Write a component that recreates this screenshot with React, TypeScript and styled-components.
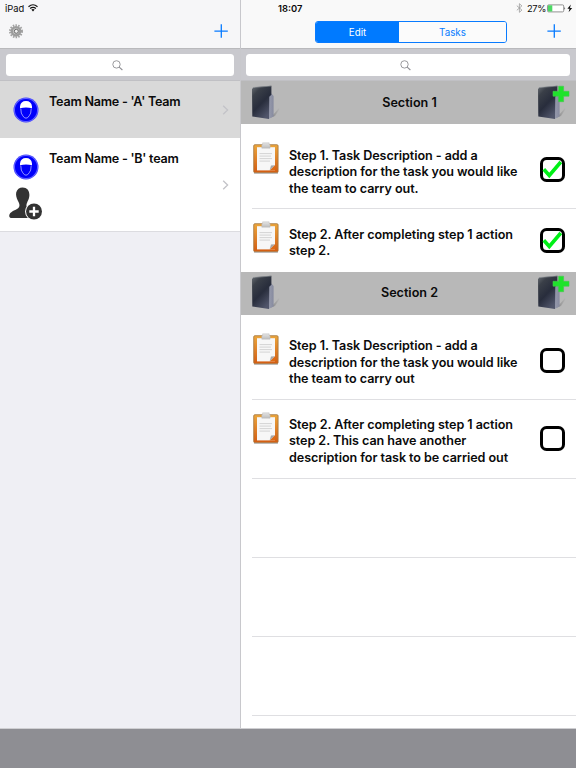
import React from 'react';
import styled, {createGlobalStyle} from 'styled-components';

const sections = [
  {name: 'Section 1', steps: [
    {lines: ['Step 1. Task Description - add a', 'description for the task you would like', 'the team to carry out.'], done: true, h: 85},
    {lines: ['Step 2. After completing step 1 action', 'step 2.'], done: true, h: 62.5},
  ]},
  {name: 'Section 2', steps: [
    {lines: ['Step 1. Task Description - add a', 'description for the task you would like', 'the team to carry out'], done: false, h: 85},
    {lines: ['Step 2. After completing step 1 action', 'step 2. This can have another', 'description for task to be carried out'], done: false, h: 79},
  ]},
];

const Plus = () => (
  <svg width="14" height="14" viewBox="0 0 14 14"><path d="M7.3 0.3V13.7M0.4 7.2H13.8" stroke="#087bff" strokeWidth="1.3"/></svg>
);

const SearchIcon = () => (
  <svg width="11" height="11" viewBox="0 0 11 11" fill="none" stroke="#8e8e93">
    <circle cx="4.5" cy="4.4" r="3.7" strokeWidth="0.9"/>
    <path d="M7.2 7.1L10.4 10" strokeWidth="1.1"/>
  </svg>
);

const Chevron = () => (
  <svg width="7" height="10" viewBox="0 0 7 10"><path d="M1.2 0.7L5.6 5L1.2 9.3" fill="none" stroke="#c3c3c8" strokeWidth="1.3"/></svg>
);

const Gear = () => (
  <svg width="16" height="16" viewBox="0 0 16 16">
    <circle cx="8" cy="8.3" r="6" fill="none" stroke="#a2a2a2" strokeWidth="2" strokeDasharray="1.5 1.2"/>
    <circle cx="8" cy="8.3" r="4.2" fill="#c8c8c8" stroke="#9c9c9c" strokeWidth="2.4"/>
    <circle cx="8.3" cy="8.3" r="2" fill="#f0f0f0" stroke="#6c6c6c" strokeWidth="1"/>
  </svg>
);

const Wifi = () => (
  <svg width="10" height="8" viewBox="0 0 10 8" fill="none" stroke="#111" strokeWidth="1.2">
    <path d="M0.5 2.7Q5 -1.2 9.5 2.7M2.1 4.5Q5 2.1 7.9 4.5"/>
    <path d="M3.3 5.6Q5 4.3 6.7 5.6L5 7.5Z" fill="#111" stroke="none"/>
  </svg>
);

const Bluetooth = () => (
  <svg width="7" height="10" viewBox="0 0 7 10"><path d="M0.8 2.7L5.9 7.1L3.4 9.3V0.7L5.9 2.9L0.8 7.3" fill="none" stroke="#9a9a9a" strokeWidth="0.8"/></svg>
);

const Battery = () => (
  <svg width="26" height="9" viewBox="0 0 26 9">
    <rect x="0.5" y="0.9" width="16.2" height="7" rx="1.2" fill="#fff" stroke="#777" strokeWidth="0.8"/>
    <rect x="1" y="1.3" width="4.3" height="6.2" fill="#4cd964"/>
    <path d="M17.4 3Q19 4.4 17.4 5.8Z" fill="#444"/>
    <path d="M23.8 0.6L20.4 4.8H22.5L21.6 8.2L25.2 3.9H23Z" fill="#111"/>
  </svg>
);

const Helmet = () => (
  <svg width="26" height="26" viewBox="0 0 26 26">
    <circle cx="13" cy="13" r="12.5" fill="#3f3fff"/>
    <circle cx="13" cy="13" r="11.6" fill="none" stroke="#8c8cff" strokeWidth="0.5"/>
    <circle cx="13" cy="13" r="11" fill="#0000fa"/>
    <path d="M7 11.2V9.5Q7.6 4 13 4T19 9.5V11.2Q13 9.9 7 11.2Z" fill="#fff"/>
    <path d="M7.8 11.6Q7.8 17 9.8 18.8Q11.2 21.2 13 21.2T16.2 18.8Q18.2 17 18.2 11.6" fill="none" stroke="#b9b9ff" strokeWidth="0.8"/>
  </svg>
);

const AddUser = () => (
  <svg width="34" height="34" viewBox="0 0 34 34">
    <path d="M13.6 0.5C18 0.5 20.5 3.5 20.4 8C20.3 12.5 18.2 14.5 17.5 17.5C17.1 19.5 18.2 21.1 20.5 22.1L24 24V31H3Q0.2 31 0.2 28.7C0.8 24.5 5.8 23.6 8.8 21.5C11.5 19.5 10.5 16.5 9 14C7.4 11.2 6.7 8 7.2 5.6C7.9 2.4 10.5 0.5 13.6 0.5Z" fill="#333"/>
    <circle cx="25" cy="24.5" r="9" fill="#fff"/>
    <circle cx="25" cy="24.5" r="8" fill="#333"/>
    <path d="M25 19.8V29.2M20.3 24.5H29.7" stroke="#fff" strokeWidth="2.3"/>
  </svg>
);

const Folder = ({add}: {add?: boolean}) => (
  <svg width="34" height="38" viewBox="0 0 34 38">
    <defs>
      <linearGradient id="cover" x1="0" y1="0" x2="0.6" y2="1">
        <stop offset="0" stopColor="#6b7075"/>
        <stop offset="0.25" stopColor="#3a3f48"/>
        <stop offset="0.6" stopColor="#282d3c"/>
        <stop offset="1" stopColor="#50556a"/>
      </linearGradient>
      <linearGradient id="side" x1="0" y1="0" x2="1" y2="0">
        <stop offset="0" stopColor="#989cae"/>
        <stop offset="1" stopColor="#868a9e"/>
      </linearGradient>
      <linearGradient id="shade" x1="0" y1="0" x2="1" y2="0">
        <stop offset="0" stopColor="#858585"/>
        <stop offset="1" stopColor="#b6b6b6"/>
      </linearGradient>
    </defs>
    <path d="M22 31L28.5 23.5V25.5L24 32L20 33.5Z" fill="url(#shade)"/>
    <path d="M17.5 11.5L20.3 9.5L22.6 12V32.6L17.5 35Z" fill="url(#side)"/>
    <path d="M1 5L2.2 3.4L20.4 1.8V10.8L18.3 12.8L18 35L1.3 32.4Z" fill="url(#cover)"/>
    <path d="M1.2 5L2.2 3.5L20.3 2.1" fill="none" stroke="#91969a" strokeWidth="0.6"/>
    {add && <path d="M21.6 2.2H26.6V7.3H32V12.2H26.6V17.7H21.6V12.2H16V7.3H21.6Z" fill="#1fe32b" stroke="#45c94b" strokeWidth="0.6"/>}
  </svg>
);

const Clipboard = () => (
  <svg width="26" height="33" viewBox="0 0 26 33">
    <defs>
      <linearGradient id="board" x1="0" y1="0" x2="0" y2="1">
        <stop offset="0" stopColor="#eba63c"/>
        <stop offset="1" stopColor="#d35c12"/>
      </linearGradient>
      <linearGradient id="clip" x1="0" y1="0" x2="0" y2="1">
        <stop offset="0" stopColor="#e4e4e4"/>
        <stop offset="1" stopColor="#bdbdbd"/>
      </linearGradient>
    </defs>
    <rect x="0.7" y="2.7" width="24.4" height="28" rx="1.2" fill="url(#board)" stroke="#a3763f" strokeWidth="0.8"/>
    <path d="M1 31.4H25" stroke="#aaa" strokeWidth="0.8"/>
    <path d="M4 5.2H22V28.4H4Z" fill="#f7f7f7"/>
    <path d="M16.6 28.4L18 23.6L22 23.3Z" fill="#a7a7a7"/>
    <path d="M16.6 28.4L22 23.3V28.4Z" fill="#dd6a16"/>
    <path d="M6.5 11.6H19M6.5 14.1H18M6.5 16.6H19M6.5 19.1H17" stroke="#cfcfcf" strokeWidth="0.9"/>
    <path d="M8.8 2.8Q9 2.2 9.6 2.2V0.8H16.2V2.2Q17 2.2 17.1 3V6.2H8.8Z" fill="url(#clip)" stroke="#b5b5b5" strokeWidth="0.4"/>
  </svg>
);

const Check = () => (
  <svg width="21" height="19" viewBox="0 0 21 19"><path d="M1.8 9.2L7.3 15.5L18.8 2" fill="none" stroke="#00f016" strokeWidth="3.6"/></svg>
);

export default () => {
  return(<>
    <Reset/>
    <Screen>
      <Panes>
        <Teams>
          <NavBar $bg="#f6f6f8">
            <Status><Device>iPad</Device><Wifi/></Status>
            <Tools $left={8}><Gear/><Plus/></Tools>
          </NavBar>
          <SearchBar><Field><SearchIcon/></Field></SearchBar>
          <Team $h={57} $on>
            <TeamIcons><Helmet/></TeamIcons>
            <TeamName>Team Name - 'A' Team</TeamName>
            <Chevron/>
          </Team>
          <Team $h={94}>
            <TeamIcons><Helmet/><AddUser/></TeamIcons>
            <TeamName>Team Name - 'B' team</TeamName>
            <Chevron/>
          </Team>
        </Teams>
        <Tasks>
          <NavBar $bg="#f9f9f9">
            <Status>
              <Clock>18:07</Clock>
              <Bluetooth/><Percent>27%</Percent><Battery/>
            </Status>
            <Tools $left={74}>
              <Segments>
                <Segment $w={83} $on>Edit</Segment>
                <Segment $w={107}>Tasks</Segment>
              </Segments>
              <Plus/>
            </Tools>
          </NavBar>
          <SearchBar><Field><SearchIcon/></Field></SearchBar>
          {sections.map(s => <React.Fragment key={s.name}>
            <SectionHead>
              <Folder/>
              <span>{s.name}</span>
              <Folder add/>
            </SectionHead>
            {s.steps.map((step, i) => <Step key={i} $h={step.h} $line={s.name === 'Section 2' || i === 0}>
              <Clipboard/>
              <StepText $tall={step.h === 85}>{step.lines.map(line => <div key={line}>{line}</div>)}</StepText>
              <Box $tall={step.h === 85}>{step.done && <Check/>}</Box>
            </Step>)}
          </React.Fragment>)}
          <Step $h={79} $line/>
          <Step $h={79} $line/>
          <Step $h={79} $line/>
        </Tasks>
      </Panes>
      <Footer/>
    </Screen>
  </>)
}

const Reset = createGlobalStyle`
  body {
    margin: 0;
    font-family: Inter, "Liberation Sans", sans-serif;
    color: #0b0b0b;
  }
  * { box-sizing: border-box; }
  svg { display: block; flex: none; }
`;

const Screen = styled.div`
  width: 576px;
  height: 768px;
  display: flex;
  flex-direction: column;
  overflow: hidden;
`;

const Panes = styled.div`
  height: 729px;
  display: flex;
  border-bottom: 1px solid #cfcfd2;
`;

const Teams = styled.div`
  width: 240px;
  background-color: #efeff4;
`;

const Tasks = styled.div`
  flex: 1;
  background-color: #fff;
  border-left: 1px solid #c8c8cc;
`;

const NavBar = styled.div<{$bg: string}>`
  height: 48px;
  background-color: ${props => props.$bg};
`;

const Status = styled.div`
  height: 16px;
  padding: 0 3px 0 5px;
  display: flex;
  align-items: center;
  font-size: 9.4px;
`;

const Device = styled.span`
  margin-right: 4px;
`;

const Clock = styled.span`
  width: 241px;
  padding-left: 32px;
  margin-right: 29px;
  font-size: 9.4px;
  font-weight: 600;
`;

const Percent = styled.span`
  width: 20px;
  margin: 0 0 0 4px;
  font-size: 9.3px;
  letter-spacing: -0.3px;
`;

const Tools = styled.div<{$left: number}>`
  height: 32px;
  padding: 0 15px 2px ${props => props.$left}px;
  display: flex;
  align-items: center;
  justify-content: space-between;
  ${Teams} & { padding-right: 12px; }
`;

const Segments = styled.div`
  width: 192px;
  height: 22px;
  margin-top: 2px;
  display: flex;
  border: 1px solid #087bff;
  border-radius: 3px;
  overflow: hidden;
`;

const Segment = styled.div<{$w: number, $on?: boolean}>`
  width: ${props => props.$w}px;
  line-height: 21px;
  text-align: center;
  font-size: 9.8px;
  color: ${props => props.$on ? "#fff" : "#087bff"};
  background-color: ${props => props.$on ? "#007aff" : "#fbfbfb"};
`;

const SearchBar = styled.div`
  height: 33px;
  padding: 5px 6px;
  background-color: #c9c9ce;
  border-top: 1px solid #b9b9bc;
  border-bottom: 1px solid #c0c0c4;
  ${Tasks} & { padding-left: 5px; }
`;

const Field = styled.div`
  height: 21.5px;
  display: flex;
  align-items: center;
  justify-content: center;
  background-color: #fff;
  border-radius: 3.5px;
  padding: 1px 6px 0 0;
`;

const Team = styled.div<{$h: number, $on?: boolean}>`
  height: ${props => props.$h}px;
  padding-right: 11px;
  display: flex;
  align-items: center;
  background-color: ${props => props.$on ? "#d9d9d9" : "#fff"};
  ${props => !props.$on && "border-bottom: 1px solid #dcdce0;"}
`;

const TeamIcons = styled.div`
  width: 49px;
  height: 100%;
  padding: 16px 0 0 9px;
  & > :first-child { margin: 0 0 7px 4px; }
`;

const TeamName = styled.div`
  flex: 1;
  height: 100%;
  padding-top: 12px;
  font-size: 12.6px;
  font-weight: 600;
  letter-spacing: -0.25px;
  line-height: 17px;
  white-space: nowrap;
`;

const SectionHead = styled.div`
  height: 43px;
  padding: 0 5px 0 10px;
  display: flex;
  align-items: center;
  justify-content: space-between;
  background-color: #b8b8b8;
  font-size: 12.6px;
  font-weight: 600;
  span { margin: 0 3px 1px 0; }
`;

const Step = styled.div<{$h: number, $line?: boolean}>`
  height: ${props => props.$h}px;
  margin-left: 11px;
  padding: 0 11px 0 1px;
  display: flex;
  align-items: center;
  ${props => props.$line && "border-bottom: 1px solid #dfdfe2;"}
  & > svg {
    align-self: flex-start;
    margin-top: ${props => props.$h === 85 ? 18 : 12}px;
  }
`;

const StepText = styled.div<{$tall?: boolean}>`
  flex: 1;
  margin-left: 10px;
  padding-top: ${props => props.$tall ? 13 : 6}px;
  font-size: 12.6px;
  font-weight: 600;
  letter-spacing: -0.07px;
  line-height: 16.4px;
  white-space: nowrap;
`;

const Box = styled.div<{$tall?: boolean}>`
  width: 25px;
  height: 25px;
  margin-top: ${props => props.$tall ? 7 : 0}px;
  display: flex;
  align-items: center;
  justify-content: center;
  border: 3px solid #000;
  border-radius: 6.5px;
`;

const Footer = styled.div`
  flex: 1;
  background-color: #8e8e93;
`;
